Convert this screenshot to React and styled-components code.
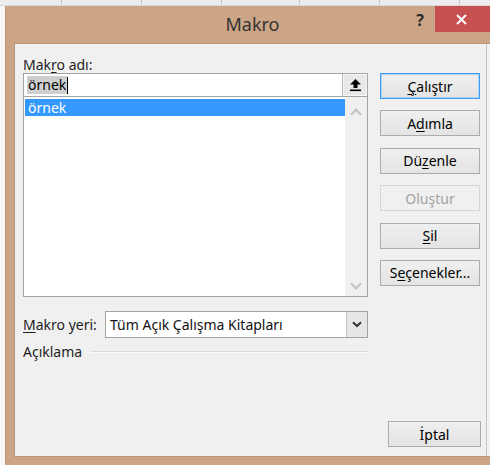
import React from 'react';
import styled, { createGlobalStyle } from 'styled-components';

const GlobalStyle = createGlobalStyle`
	html, body {
		margin: 0;
		padding: 0;
		background: #f7f7f7;
		font-family: "Noto Sans", "Open Sans", Arial, sans-serif;
		overflow: hidden;
	}
`;

const FONT = '"Noto Sans", "Open Sans", Arial, sans-serif';

export default function App() {
	return (
		<>
			<GlobalStyle />
			<Screen>
				<SheetHeader>
					{[62, 80, 80, 78, 80, 80].map((w, i) => (
						<HeaderCell key={i} $w={w} />
					))}
				</SheetHeader>
				<Stage>
					<Dialog>
						<TitleBar>
							<Title>Makro</Title>
							<HelpButton>?</HelpButton>
							<CloseButton>
								<svg width="11" height="11" viewBox="0 0 11 11">
									<path d="M1 1 L10 10 M10 1 L1 10" stroke="#fff" strokeWidth="2" />
								</svg>
							</CloseButton>
						</TitleBar>
						<Client>
							<Main>
								<LeftColumn>
									<Label>
										Mak<u>r</u>o adı:
									</Label>
									<NameField>
										<NameInput>
											<Selected>örnek</Selected>
											<Caret />
										</NameInput>
										<PickButton>
											<svg width="13" height="14" viewBox="0 0 13 14">
												<path d="M6.5 1 L12 6.5 L8.5 6.5 L8.5 10 L4.5 10 L4.5 6.5 L1 6.5 Z" fill="#000" />
												<rect x="1" y="11.5" width="11" height="1.6" fill="#000" />
											</svg>
										</PickButton>
									</NameField>
									<MacroList>
										<ListItems>
											<ListItem $active>örnek</ListItem>
										</ListItems>
										<ScrollBar>
											<Chevron $up />
											<Chevron />
										</ScrollBar>
									</MacroList>
									<PlaceRow>
										<Label>
											<u>M</u>akro yeri:
										</Label>
										<Select>
											<SelectText>Tüm Açık Çalışma Kitapları</SelectText>
											<DropButton>
												<svg width="10" height="7" viewBox="0 0 10 7">
													<path d="M1 1.2 L5 5 L9 1.2" stroke="#333" strokeWidth="2" fill="none" />
												</svg>
											</DropButton>
										</Select>
									</PlaceRow>
									<GroupRow>
										<GroupLabel>Açıklama</GroupLabel>
										<GroupLine />
									</GroupRow>
								</LeftColumn>
								<ButtonColumn>
									<Button $default>
										<u>Ç</u>alıştır
									</Button>
									<Button>
										A<u>d</u>ımla
									</Button>
									<Button>
										Dü<u>z</u>enle
									</Button>
									<Button disabled>Oluştur</Button>
									<Button>
										<u>S</u>il
									</Button>
									<Button>
										S<u>e</u>çenekler...
									</Button>
								</ButtonColumn>
							</Main>
							<Footer>
								<Button $w={93}>İptal</Button>
							</Footer>
						</Client>
					</Dialog>
				</Stage>
			</Screen>
		</>
	);
}

const Screen = styled.div`
	width: 490px;
	height: 465px;
	display: flex;
	flex-direction: column;
	overflow: hidden;
`;

const SheetHeader = styled.div`
	height: 6px;
	display: flex;
	background: #ececec;
	border-bottom: 1px solid #dadada;
	box-sizing: border-box;
`;

const HeaderCell = styled.div`
	width: ${(p) => p.$w}px;
	flex: none;
	border-right: 1px solid #c9c9c9;
	box-sizing: border-box;
`;

const Stage = styled.div`
	flex: 1;
	display: flex;
	padding-left: 5px;
`;

const Dialog = styled.div`
	flex: 1;
	display: flex;
	flex-direction: column;
	background: #cca587;
	border-left: 1px solid #bd967a;
	padding: 0 0 8px 8px;
`;

const TitleBar = styled.div`
	height: 37px;
	display: grid;
	grid-template-columns: 1fr 35px 55px;
	align-items: start;
	margin-left: -8px;
`;

const Title = styled.div`
	grid-area: 1 / 1 / 2 / -1;
	height: 37px;
	line-height: 37px;
	text-align: center;
	padding-left: 9px;
	font-family: ${FONT};
	font-size: 18px;
	color: #333;
`;

const HelpButton = styled.div`
	grid-area: 1 / 2;
	height: 28px;
	line-height: 28px;
	text-align: center;
	font-family: ${FONT};
	font-size: 16px;
	font-weight: bold;
	color: #2a2a2a;
	padding-left: 5px;
`;

const CloseButton = styled.div`
	grid-area: 1 / 3;
	height: 26px;
	background: #c75050;
	display: flex;
	align-items: center;
	justify-content: center;
	padding-right: 3px;
`;

const Client = styled.div`
	flex: 1;
	display: flex;
	flex-direction: column;
	background: #f0f0f0;
	border: 1px solid #b8957a;
	border-right: none;
	box-shadow: inset -3px 0 0 #f3f3f3, inset -4px 0 0 #c4c4c4;
	padding: 12px 8px 9px 8px;
	font-family: ${FONT};
	font-size: 14px;
	color: #000;
`;

const Main = styled.div`
	display: grid;
	grid-template-columns: 345px 100px;
	column-gap: 12px;
	align-items: start;
`;

const LeftColumn = styled.div`
	display: flex;
	flex-direction: column;
`;

const Label = styled.div`
	height: 17px;
	line-height: 17px;
	white-space: nowrap;
	color: #1e1e1e;

	u {
		text-underline-offset: 2px;
	}
`;

const NameField = styled.div`
	height: 24px;
	display: flex;
	border: 1px solid #a4a4a4;
	background: #fff;
	box-sizing: border-box;
`;

const NameInput = styled.div`
	flex: 1;
	display: flex;
	align-items: center;
	padding-left: 3px;
`;

const Selected = styled.span`
	background: #cfcfcf;
	line-height: 18px;
	padding: 0 1px;
`;

const Caret = styled.span`
	width: 1px;
	height: 17px;
	background: #000;
`;

const PickButton = styled.div`
	width: 24px;
	display: flex;
	align-items: center;
	justify-content: center;
	background: #e8e8e8;
	border-left: 1px solid #bdbdbd;
	box-shadow: inset 0 0 0 1px #f6f6f6;
`;

const MacroList = styled.div`
	height: 200px;
	display: flex;
	border: 1px solid #a4a4a4;
	border-top: none;
	background: #fff;
	box-sizing: border-box;
`;

const ListItems = styled.div`
	flex: 1;
	padding: 2px 0 0 1px;
`;

const ListItem = styled.div`
	height: 17px;
	line-height: 17px;
	padding-left: 3px;
	background: ${(p) => (p.$active ? '#3399ff' : 'transparent')};
	color: ${(p) => (p.$active ? '#fff' : '#000')};
`;

const ScrollBar = styled.div`
	width: 22px;
	background: #f0f0f0;
	display: flex;
	flex-direction: column;
	justify-content: space-between;
	align-items: center;
	padding: 10px 0 8px;
`;

const Chevron = styled.div`
	width: 6px;
	height: 6px;
	border-left: 2px solid #c3c3c3;
	border-top: 2px solid #c3c3c3;
	transform: rotate(${(p) => (p.$up ? '45deg' : '225deg')});
	margin-top: ${(p) => (p.$up ? '3px' : '0')};
`;

const PlaceRow = styled.div`
	display: grid;
	grid-template-columns: 82px 1fr;
	align-items: center;
	margin-top: 14px;
`;

const Select = styled.div`
	height: 27px;
	display: flex;
	border: 1px solid #a4a4a4;
	background: #fff;
	box-sizing: border-box;
`;

const SelectText = styled.div`
	flex: 1;
	line-height: 25px;
	padding-left: 4px;
	color: #111;
`;

const DropButton = styled.div`
	width: 20px;
	display: flex;
	align-items: center;
	justify-content: center;
	background: #e6e6e6;
	border-left: 1px solid #c4c4c4;
`;

const GroupRow = styled.div`
	display: flex;
	align-items: center;
	gap: 9px;
	margin-top: 5px;
`;

const GroupLabel = styled.div`
	line-height: 17px;
	color: #1e1e1e;
`;

const GroupLine = styled.div`
	flex: 1;
	height: 1px;
	background: #d9d9d9;
	box-shadow: 0 1px 0 #fbfbfb;
`;

const ButtonColumn = styled.div`
	display: flex;
	flex-direction: column;
	gap: 11.4px;
	padding-top: 17px;
`;

const Button = styled.button`
	width: ${(p) => (p.$w ? `${p.$w}px` : '100%')};
	height: 26px;
	padding: 0;
	font-family: ${FONT};
	font-size: 14px;
	color: #000;
	background: linear-gradient(#efefef, #e4e4e4);
	border: 1px solid ${(p) => (p.$default ? '#3c9df2' : '#acacac')};
	box-shadow: ${(p) => (p.$default ? 'inset 0 0 0 1px #a9d3f8' : 'none')};
	cursor: default;

	&:disabled {
		color: #a2a2a2;
		background: #f0f0f0;
		border-color: #d5d5d5;
	}

	u {
		text-underline-offset: 2px;
	}
`;

const Footer = styled.div`
	margin-top: auto;
	display: flex;
	justify-content: flex-end;
	padding-right: 1px;
`;
